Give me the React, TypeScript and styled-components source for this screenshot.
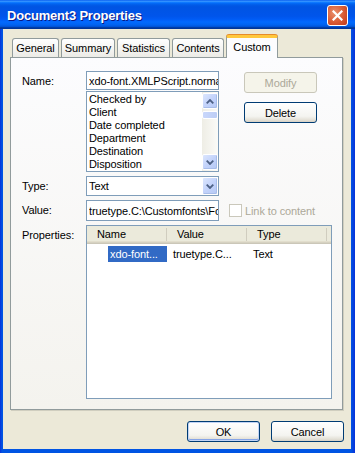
import React from "react";
import styled, { createGlobalStyle, css } from "styled-components";

const Global = createGlobalStyle`
  html, body { margin: 0; padding: 0; background: #fff; }
  body { font-family: "Liberation Sans", Arial, sans-serif; font-size: 11px; letter-spacing: -0.1px; color: #000; }
  * { box-sizing: border-box; }
`;

const Window = styled.div`
  width: 355px;
  height: 453px;
  display: flex;
  flex-direction: column;
  background: linear-gradient(to right, #0831d9 0, #0054e3 2px, #0054e3 351px, #0831d9 100%);
  overflow: hidden;
`;

const TitleBar = styled.div`
  height: 29px;
  flex: none;
  display: flex;
  align-items: center;
  justify-content: space-between;
  padding: 2px 7px 0 7px;
  background: linear-gradient(
    to bottom,
    #0058ee 0%,
    #3a93ff 4%,
    #288eff 6%,
    #127dff 8%,
    #036ffc 10%,
    #0262ee 14%,
    #0057e5 20%,
    #0054e3 24%,
    #0055eb 56%,
    #005bf5 66%,
    #026afe 76%,
    #0062ef 86%,
    #0052d6 92%,
    #0040ab 94%,
    #003092 100%
  );
`;

const Title = styled.div`
  color: #fff;
  font-family: "Liberation Sans", Arial, sans-serif;
  font-weight: bold;
  font-size: 13px;
  letter-spacing: -0.2px;
  text-shadow: 1px 1px 0 #0a1883;
`;

const CloseButton = styled.div`
  width: 21px;
  height: 21px;
  border: 1px solid #fff;
  border-radius: 3px;
  background: radial-gradient(circle at 35% 35%, #e9906e 0%, #d95a33 55%, #c0381a 100%);
  display: flex;
  align-items: center;
  justify-content: center;
`;

const Frame = styled.div`
  flex: 1;
  display: flex;
  flex-direction: column;
  background: #ece9d8;
  margin: 0 4px 4px 3px;
`;

const TabRow = styled.div`
  height: 22px;
  margin-top: 6px;
  padding-left: 9px;
  display: flex;
  align-items: flex-end;
  gap: 2px;
`;

const Tab = styled.div<{ $w: number; $active?: boolean }>`
  width: ${(p) => p.$w}px;
  height: 19px;
  display: flex;
  align-items: center;
  justify-content: center;
  border: 1px solid #919b9c;
  border-bottom: none;
  border-radius: 3px 3px 0 0;
  background: linear-gradient(#ffffff, #ecebe6);
  ${(p) =>
    p.$active &&
    css`
      height: 23px;
      margin-bottom: -1px;
      padding-bottom: 3px;
      background: #fcfcfe;
      border-top: 3px solid #ffc83c;
      box-shadow: 0 -1px 0 #e68b2c;
      position: relative;
      z-index: 1;
    `}
`;

const Panel = styled.div`
  height: 353px;
  flex: none;
  margin: 0 8px 0 7px;
  border: 1px solid #919b9c;
  box-shadow: 1px 1px 0 #d0cebf;
  background: linear-gradient(#fcfcfe, #f4f3ee);
  padding: 13px 10px 10px 11px;
  display: grid;
  grid-template-columns: 64px 133px 1fr;
  grid-template-rows: 101px 20px 21px 174px;
  row-gap: 4px;
`;

const Label = styled.div`
  line-height: 20px;
`;

const Combo = styled.div`
  display: flex;
  flex-direction: column;
  gap: 1px;
`;

const Field = styled.div<{ $h: number }>`
  height: ${(p) => p.$h}px;
  border: 1px solid #7f9db9;
  background: #fff;
  padding-left: 2px;
  display: flex;
  align-items: center;
  white-space: nowrap;
  overflow: hidden;
`;

const FieldText = styled.span`
  flex: 1;
  overflow: hidden;
  white-space: nowrap;
`;

const ListBox = styled.div`
  height: 81px;
  border: 1px solid #7f9db9;
  background: #fff;
  display: flex;
  overflow: hidden;
`;

const Items = styled.div`
  flex: 1;
  padding: 1px 0 0 2px;
  overflow: hidden;
`;

const Item = styled.div`
  height: 13px;
  line-height: 13px;
  white-space: nowrap;
`;

const ScrollBar = styled.div`
  width: 16px;
  display: flex;
  flex-direction: column;
  padding: 1px 0;
  background: linear-gradient(to right, #eeede5, #fbfbf8);
`;

const ScrollBtn = styled.div<{ $h?: number }>`
  height: ${(p) => p.$h ?? 16}px;
  flex: none;
  border: 1px solid #fff;
  border-radius: 2px;
  background: linear-gradient(135deg, #dce6fd 0%, #c3d3fb 50%, #b6c9f4 100%);
  box-shadow: inset -1px -1px 0 #a8bde9;
  display: flex;
  align-items: center;
  justify-content: center;
`;

const Thumb = styled.div`
  height: 8px;
  margin-top: 2px;
  border: 1px solid #fff;
  border-radius: 2px;
  background: linear-gradient(to right, #c9d7fb, #bccdf5);
`;

const Spacer = styled.div`
  flex: 1;
`;

const SideButtons = styled.div`
  display: flex;
  flex-direction: column;
  gap: 9px;
  padding: 1px 0 0 25px;
`;

const Button = styled.div<{ $disabled?: boolean; $default?: boolean }>`
  width: 73px;
  height: 21px;
  flex: none;
  display: flex;
  align-items: center;
  justify-content: center;
  border: 1px solid #003c74;
  border-radius: 3px;
  background: linear-gradient(180deg, #ffffff 0%, #f4f4f0 70%, #e3e0d6 90%, #d6d0c5 100%);
  ${(p) =>
    p.$default &&
    css`
      box-shadow: inset 0 0 0 1px #c2d4f5, inset 0 -1px 0 1px #86a4e6;
    `}
  ${(p) =>
    p.$disabled &&
    css`
      border-color: #c9c7ba;
      background: #f5f4ea;
      color: #aca899;
    `}
`;

const Select = styled.div`
  border: 1px solid #7f9db9;
  background: #fff;
  display: flex;
  align-items: stretch;
  padding-left: 2px;
`;

const SelectText = styled.div`
  flex: 1;
  display: flex;
  align-items: center;
`;

const DropBtn = styled(ScrollBtn)`
  width: 16px;
  height: auto;
`;

const CheckRow = styled.div`
  display: flex;
  align-items: center;
  gap: 3px;
  padding-left: 10px;
  color: #aca899;
`;

const CheckBox = styled.div`
  width: 13px;
  height: 13px;
  border: 1px solid #cac8bb;
  background: #fff;
`;

const ListView = styled.div`
  grid-column: 2 / 4;
  border: 1px solid #7f9db9;
  background: #fff;
  display: flex;
  flex-direction: column;
  overflow: hidden;
`;

const Header = styled.div`
  height: 18px;
  display: flex;
  background: #ebeadb;
  box-shadow: inset 0 -1px 0 #cbc7b8, inset 0 -2px 0 #d6d2c2, inset 0 -3px 0 #e2decd;
`;

const HeadCell = styled.div`
  width: 80px;
  padding: 0 0 2px 10px;
  display: flex;
  align-items: center;
  border-right: 1px solid #d0cdbf;
  margin: 2px 0 3px;
`;

const Row = styled.div`
  height: 16px;
  margin-top: 2px;
  display: flex;
`;

const Cell = styled.div<{ $pad: number }>`
  width: 80px;
  padding-left: ${(p) => p.$pad}px;
  display: flex;
  align-items: center;
  white-space: nowrap;
  overflow: hidden;
`;

const Selected = styled.span`
  flex: 1;
  height: 16px;
  line-height: 16px;
  padding-left: 2px;
  background: #316ac5;
  color: #fff;
  white-space: nowrap;
  overflow: hidden;
`;

const Footer = styled.div`
  display: flex;
  justify-content: flex-end;
  gap: 11px;
  margin-top: 11px;
  padding-right: 7px;
`;

const Chevron = ({ up }: { up?: boolean }) => (
  <svg width="8" height="5" viewBox="0 0 8 5">
    <path
      d={up ? "M0.7 4.3 L4 1 L7.3 4.3" : "M0.7 0.7 L4 4 L7.3 0.7"}
      stroke="#4d6185"
      strokeWidth="1.8"
      fill="none"
    />
  </svg>
);

const tabs = [
  { label: "General", w: 47 },
  { label: "Summary", w: 54 },
  { label: "Statistics", w: 53 },
  { label: "Contents", w: 52 },
  { label: "Custom", w: 52, active: true },
];

const names = ["Checked by", "Client", "Date completed", "Department", "Destination", "Disposition"];

export default function App() {
  return (
    <>
      <Global />
      <Window>
        <TitleBar>
          <Title>Document3 Properties</Title>
          <CloseButton>
            <svg width="11" height="11" viewBox="0 0 11 11">
              <path d="M1.5 1.5 L9.5 9.5 M9.5 1.5 L1.5 9.5" stroke="#fff" strokeWidth="2.2" strokeLinecap="square" />
            </svg>
          </CloseButton>
        </TitleBar>
        <Frame>
          <TabRow>
            {tabs.map((t) => (
              <Tab key={t.label} $w={t.w} $active={t.active}>
                {t.label}
              </Tab>
            ))}
          </TabRow>
          <Panel>
            <Label>Name:</Label>
            <Combo>
              <Field $h={19}>
                <FieldText>xdo-font.XMLPScript.normal</FieldText>
              </Field>
              <ListBox>
                <Items>
                  {names.map((n) => (
                    <Item key={n}>{n}</Item>
                  ))}
                </Items>
                <ScrollBar>
                  <ScrollBtn>
                    <Chevron up />
                  </ScrollBtn>
                  <Thumb />
                  <Spacer />
                  <ScrollBtn>
                    <Chevron />
                  </ScrollBtn>
                </ScrollBar>
              </ListBox>
            </Combo>
            <SideButtons>
              <Button $disabled>Modify</Button>
              <Button>Delete</Button>
            </SideButtons>

            <Label>Type:</Label>
            <Select>
              <SelectText>Text</SelectText>
              <DropBtn>
                <Chevron />
              </DropBtn>
            </Select>
            <div />

            <Label>Value:</Label>
            <Field $h={21}>
              <FieldText>truetype.C:\Customfonts\Fonts</FieldText>
            </Field>
            <CheckRow>
              <CheckBox />
              <span>Link to content</span>
            </CheckRow>

            <Label>Properties:</Label>
            <ListView>
              <Header>
                <HeadCell>Name</HeadCell>
                <HeadCell>Value</HeadCell>
                <HeadCell>Type</HeadCell>
              </Header>
              <Row>
                <Cell $pad={21}>
                  <Selected>xdo-font...</Selected>
                </Cell>
                <Cell $pad={6}>truetype.C...</Cell>
                <Cell $pad={6}>Text</Cell>
              </Row>
            </ListView>
          </Panel>
          <Footer>
            <Button $default>OK</Button>
            <Button>Cancel</Button>
          </Footer>
        </Frame>
      </Window>
    </>
  );
}
